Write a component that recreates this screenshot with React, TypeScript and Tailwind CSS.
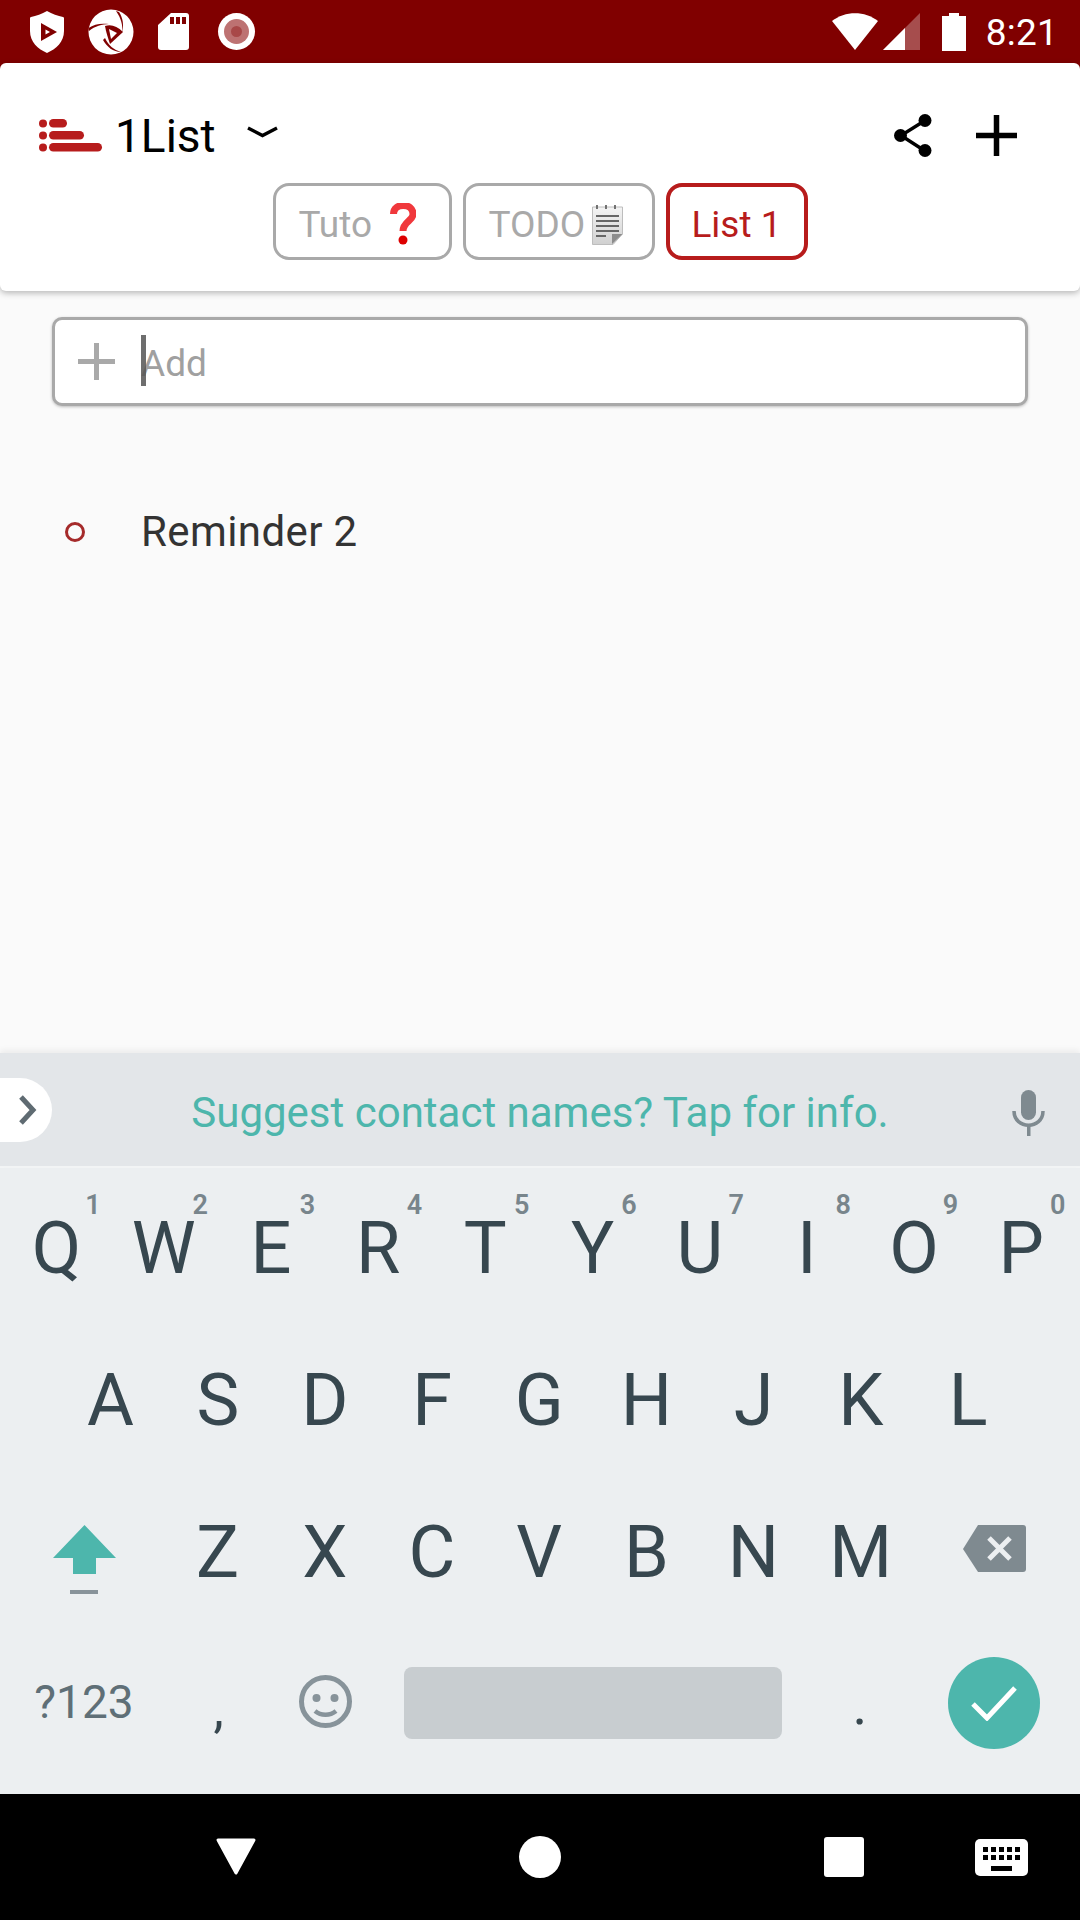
const sans = "font-['Roboto','Liberation_Sans',sans-serif]"

const row1 = [
  ['Q', '1'], ['W', '2'], ['E', '3'], ['R', '4'], ['T', '5'],
  ['Y', '6'], ['U', '7'], ['I', '8'], ['O', '9'], ['P', '0'],
]
const row2 = ['A', 'S', 'D', 'F', 'G', 'H', 'J', 'K', 'L']
const row3 = ['Z', 'X', 'C', 'V', 'B', 'N', 'M']

function StatusBar() {
  return (
    <div className="flex h-[63px] items-center bg-[#800000] pl-[30px] pr-[22px]">
      <svg width="34" height="42" viewBox="0 0 34 42" className="shrink-0">
        <path d="M17 0 C22 3 28 5 33 6 C34 6 34 7 34 8 V20 C34 31 26 38 17 42 C8 38 0 31 0 20 V8 C0 7 0 6 1 6 C6 5 12 3 17 0 Z" fill="#fff" />
        <path d="M11 12 L27 21 L11 30 Z" fill="#800000" />
        <path d="M15.5 18.5 L20 21 L15.5 23.5 Z" fill="#fff" />
      </svg>
      <svg width="46" height="46" viewBox="0 0 46 46" className="ml-[24px] shrink-0">
        <circle cx="23" cy="23" r="22.5" fill="#fff" />
        <path d="M0.5 19 C6 15 13 14 21 15 C14 15.5 7 17 1 22 Z" fill="#800000" />
        <path d="M31 3 C35 9 36 16 34 24 C35 16 33 9 28 2 Z" fill="#800000" />
        <path d="M17 29 C20 36 26 41 33 43 C25 43 19 38 15 31 Z" fill="#800000" />
        <path d="M17 17 C23 15 29 17 35 23 L22 35 C20 29 18 23 17 17 Z" fill="#800000" />
        <path d="M21 20 L29 24 L23 30 Z" fill="#fff" />
      </svg>
      <svg width="31" height="37" viewBox="0 0 31 37" className="ml-[24px] shrink-0">
        <path d="M13 0 H28 C30 0 31 1 31 3 V34 C31 36 30 37 28 37 H3 C1 37 0 36 0 34 V12 Z" fill="#fff" />
        <rect x="12" y="4" width="4" height="7" fill="#800000" />
        <rect x="18" y="4" width="4" height="7" fill="#800000" />
        <rect x="24" y="4" width="4" height="7" fill="#800000" />
      </svg>
      <div className="ml-[29px] flex h-[37px] w-[37px] shrink-0 items-center justify-center rounded-full bg-white">
        <div className="flex h-[25px] w-[25px] items-center justify-center rounded-full bg-[#bd7272]">
          <div className="h-[11px] w-[11px] rounded-full bg-[#a84848]" />
        </div>
      </div>
      <div className="flex-1" />
      <svg width="46" height="37" viewBox="0 0 46 37" className="shrink-0">
        <path d="M0 8 C13 -2.5 33 -2.5 46 8 L23 37 Z" fill="#fff" />
      </svg>
      <svg width="37" height="37" viewBox="0 0 37 37" className="ml-[5px] shrink-0">
        <path d="M37 0 V37 H0 Z" fill="#a64d4d" />
        <path d="M22 15 V37 H0 Z" fill="#fff" />
      </svg>
      <svg width="24" height="38" viewBox="0 0 24 38" className="ml-[22px] shrink-0">
        <path d="M7 0 H17 V3 H24 V38 H0 V3 H7 Z" fill="#fff" />
      </svg>
      <span className="ml-[20px] pt-[1px] text-[37px] leading-none tracking-[0.2px] text-white">8:21</span>
    </div>
  )
}

function ListLogo() {
  return (
    <svg width="64" height="33" viewBox="0 0 64 33" className="shrink-0">
      <g fill="#b71c1c">
        <circle cx="4" cy="4.5" r="4" />
        <circle cx="4" cy="16.5" r="4" />
        <circle cx="4" cy="28.5" r="4" />
        <rect x="10" y="0" width="18" height="8.5" rx="4.25" />
        <rect x="10" y="12" width="35" height="8.5" rx="4.25" />
        <rect x="10" y="24" width="53" height="8.5" rx="4.25" />
      </g>
    </svg>
  )
}

function Tabs() {
  return (
    <div className="mt-[22px] flex justify-center gap-[11px]">
      <div className="flex h-[77px] w-[179px] items-center rounded-[16px] border-[3px] border-[#a9a9a9] pl-[23px] pt-[5px] text-[37px] leading-none text-[#a9a9a9]">
        <span>Tuto</span>
        <svg width="26" height="42" viewBox="0 0 26 42" className="ml-[18px] shrink-0">
          <path d="M3.5 11 C3.5 -0.5 23 -0.5 23 11 C23 18 13 18.5 13 28" fill="none" stroke="#f0383c" strokeWidth="7" />
          <circle cx="13" cy="37" r="4.5" fill="#dd0000" />
        </svg>
      </div>
      <div className="flex h-[77px] w-[192px] items-center rounded-[16px] border-[3px] border-[#a9a9a9] pl-[23px] pt-[5px] text-[37px] leading-none text-[#a9a9a9]">
        <span>TODO</span>
        <svg width="31" height="42" viewBox="0 0 31 42" className="ml-[7px] shrink-0">
          <defs>
            <linearGradient id="pad" x1="0" y1="0" x2="0" y2="1">
              <stop offset="0" stopColor="#f4f4f4" />
              <stop offset="1" stopColor="#d0d0d0" />
            </linearGradient>
          </defs>
          <path d="M0.5 4 H30.5 V31 L21 41.5 H0.5 Z" fill="url(#pad)" stroke="#bdbdbd" strokeWidth="1" />
          <g stroke="#666" strokeWidth="1.8" fill="none">
            <path d="M5 6 V2 M14 6 V2 M23 6 V2" />
            <path d="M4 13 H27 M4 18 H27 M4 23 H27 M4 28 H27 M4 33 H14" />
          </g>
          <path d="M20 41 L30.5 31 H20 Z" fill="#8c8c8c" />
        </svg>
      </div>
      <div className="flex h-[77px] w-[142px] items-center justify-center rounded-[16px] border-[4px] border-[#b71c1c] pt-[5px] text-[37px] leading-none text-[#b71c1c]">
        List 1
      </div>
    </div>
  )
}

function Header() {
  return (
    <div className="relative z-10 bg-[linear-gradient(#800000_50%,#fafafa_50%)]">
      <div className="h-[228px] rounded-[6px] bg-white pt-[46px] shadow-[0_2px_6px_rgba(0,0,0,0.28)]">
        <div className="flex h-[52px] items-center pl-[39px] pr-[63px]">
          <ListLogo />
          <span className="ml-[12px] pt-[2px] text-[46px] leading-none text-black">1List</span>
          <svg width="31" height="12" viewBox="0 0 31 12" className="mb-[6px] ml-[31px] shrink-0">
            <path d="M1 2 L15.5 9.5 L30 2" fill="none" stroke="#000" strokeWidth="3.4" />
          </svg>
          <div className="flex-1" />
          <svg width="38" height="43" viewBox="0 0 38 43" className="shrink-0">
            <path d="M31 6.5 L7 21.5 L31 37" fill="none" stroke="#000" strokeWidth="3.4" />
            <circle cx="31" cy="6.5" r="6.5" fill="#000" />
            <circle cx="6.5" cy="21.5" r="6.5" fill="#000" />
            <circle cx="31" cy="36.5" r="6.5" fill="#000" />
          </svg>
          <svg width="41" height="41" viewBox="0 0 41 41" className="ml-[44px] shrink-0">
            <path d="M20.5 0 V41 M0 20.5 H41" fill="none" stroke="#000" strokeWidth="5.5" />
          </svg>
        </div>
        <Tabs />
      </div>
    </div>
  )
}

function Content() {
  return (
    <div className="h-[762px] bg-[#fafafa] px-[52px] pt-[26px]">
      <div className="flex h-[89px] w-[976px] items-center rounded-[10px] border-[3px] border-[#a9a9a9] bg-white pl-[23px] shadow-[0_1px_3px_rgba(0,0,0,0.25)]">
        <svg width="37" height="37" viewBox="0 0 37 37" className="shrink-0">
          <path d="M18.5 0 V37 M0 18.5 H37" fill="none" stroke="#a9a9a9" strokeWidth="5" />
        </svg>
        <div className="relative ml-[26px] pt-[4px] text-[37px] leading-none text-[#a0a0a0]">
          <span className="absolute left-0 top-[-6px] h-[51px] w-[5px] bg-[#555555]/85" />
          <span>Add</span>
        </div>
      </div>
      <div className="mt-[105px] flex items-center pl-[13px]">
        <div className="h-[20px] w-[20px] shrink-0 rounded-full border-[3px] border-[#a52a2a]" />
        <span className="ml-[56px] text-[42px] leading-none tracking-[0.4px] text-[#333333]">Reminder 2</span>
      </div>
    </div>
  )
}

function SuggestionStrip() {
  return (
    <div className="relative flex h-[113px] items-center justify-center bg-[#e3e6e9] pt-[6px] shadow-[0_-3px_6px_rgba(0,0,0,0.06)]">
      <div className="absolute left-0 top-[25px] flex h-[64px] w-[52px] items-center rounded-r-[32px] bg-white pl-[18px]">
        <svg width="19" height="30" viewBox="0 0 19 30">
          <path d="M3 2 L15 15 L3 28" fill="none" stroke="#5f6b72" strokeWidth="5" />
        </svg>
      </div>
      <span className="text-[42px] leading-none text-[#4db6ac]">Suggest contact names? Tap for info.</span>
      <svg width="33" height="46" viewBox="0 0 33 46" className="absolute left-[1012px] top-[37px]">
        <rect x="9" y="0" width="15" height="30" rx="7.5" fill="#7f8a90" />
        <path d="M2 21 C2 40 31 40 31 21" fill="none" stroke="#7f8a90" strokeWidth="3.5" />
        <rect x="15" y="34" width="3.5" height="12" fill="#7f8a90" />
      </svg>
    </div>
  )
}

function Key({ label, hint }: { label: string; hint?: string }) {
  return (
    <div className="relative flex h-[152px] w-[107.2px] shrink-0 items-center justify-center pr-[2px] text-[72px] leading-none text-[#37474f]">
      {label}
      {hint && (
        <span className="absolute left-[79px] top-[19px] w-[20px] text-center text-[27px] font-semibold leading-none text-[#78858c]">{hint}</span>
      )}
    </div>
  )
}

function Keyboard() {
  return (
    <div className="h-[628px] border-t-[2px] border-[#f3f5f6] bg-[#eceff1] pt-[5px]">
      <div className="flex pl-[4px]">
        {row1.map(([l, h]) => <Key key={l} label={l} hint={h} />)}
      </div>
      <div className="flex pl-[58px]">
        {row2.map(l => <Key key={l} label={l} />)}
      </div>
      <div className="flex items-center">
        <div className="flex h-[152px] w-[165px] shrink-0 flex-col items-center justify-center pl-[3px] pt-[13px]">
          <svg width="63" height="49" viewBox="0 0 63 49">
            <path d="M31.5 0 L63 33 H43 V49 H20 V33 H0 Z" fill="#4db6ac" />
          </svg>
          <div className="mt-[16px] h-[4px] w-[28px] bg-[#88939a]" />
        </div>
        {row3.map(l => <Key key={l} label={l} />)}
        <svg width="63" height="47" viewBox="0 0 63 47" className="mb-[9px] ml-[48px] shrink-0">
          <path d="M15 0 H60 C62 0 63 1 63 3 V44 C63 46 62 47 60 47 H15 L0 24 Z" fill="#7f8a90" />
          <path d="M26 13 L47 34 M47 13 L26 34" fill="none" stroke="#eceff1" strokeWidth="5" />
        </svg>
      </div>
      <div className="flex h-[148px] items-center">
        <div className="w-[165px] shrink-0 pb-[2px] pl-[3px] text-center text-[46px] leading-none text-[#5f6f77]">?123</div>
        <div className="w-[107px] shrink-0 pt-[14px] text-center text-[52px] leading-none text-[#37474f]">,</div>
        <div className="flex w-[107px] shrink-0 justify-center pb-[4px]">
          <svg width="53" height="53" viewBox="0 0 53 53">
            <circle cx="26.5" cy="26.5" r="24" fill="none" stroke="#87939a" strokeWidth="5" />
            <circle cx="17.5" cy="23" r="4" fill="#87939a" />
            <circle cx="35.5" cy="23" r="4" fill="#87939a" />
            <path d="M16 36 C22 41 31 41 37 36" fill="none" stroke="#87939a" strokeWidth="4.5" />
          </svg>
        </div>
        <div className="ml-[25px] h-[72px] w-[378px] shrink-0 rounded-[8px] bg-[#c8cdd0]" />
        <div className="w-[156px] shrink-0 pt-[4px] text-center text-[56px] leading-none text-[#37474f]">.</div>
        <div className="ml-[10px] flex h-[92px] w-[92px] shrink-0 items-center justify-center rounded-full bg-[#4db6ac]">
          <svg width="46" height="36" viewBox="0 0 46 36">
            <path d="M2 19 L16 33 L44 3" fill="none" stroke="#fff" strokeWidth="5" />
          </svg>
        </div>
      </div>
    </div>
  )
}

function NavBar() {
  return (
    <div className="flex h-[126px] items-center bg-black pl-[215px]">
      <svg width="42" height="38" viewBox="0 0 42 38" className="shrink-0">
        <path d="M3 2 H39 L21 35 Z" fill="#fff" stroke="#fff" strokeWidth="3" strokeLinejoin="round" />
      </svg>
      <div className="ml-[262px] h-[42px] w-[42px] shrink-0 rounded-full bg-white" />
      <div className="ml-[263px] h-[40px] w-[40px] shrink-0 rounded-[3px] bg-white" />
      <svg width="53" height="37" viewBox="0 0 53 37" className="ml-[111px] shrink-0">
        <rect width="53" height="37" rx="5" fill="#fff" />
        <g fill="#000">
          <rect x="8" y="8" width="5" height="5" /><rect x="16" y="8" width="5" height="5" />
          <rect x="24" y="8" width="5" height="5" /><rect x="32" y="8" width="5" height="5" />
          <rect x="40" y="8" width="5" height="5" /><rect x="8" y="16" width="5" height="5" />
          <rect x="16" y="16" width="5" height="5" /><rect x="24" y="16" width="5" height="5" />
          <rect x="32" y="16" width="5" height="5" /><rect x="40" y="16" width="5" height="5" />
          <rect x="16" y="27" width="21" height="5" />
        </g>
      </svg>
    </div>
  )
}

export default function App() {
  return (
    <div className={`h-[1920px] w-[1080px] overflow-hidden bg-[#fafafa] ${sans}`}>
      <StatusBar />
      <Header />
      <Content />
      <SuggestionStrip />
      <Keyboard />
      <NavBar />
    </div>
  )
}
